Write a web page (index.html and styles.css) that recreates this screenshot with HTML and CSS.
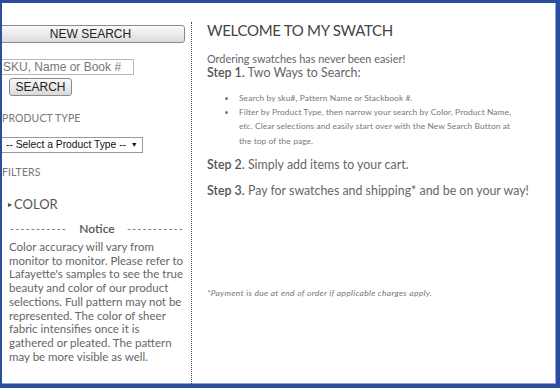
FILE: index.html
```html
<!DOCTYPE html>
<html lang="en">
<head>
  <meta charset="UTF-8">
  <title>My Swatch</title>
  <link rel="stylesheet" href="styles.css">
</head>
<body>
<div class="frame">
  <div class="sidebar">
    <button class="new-search" type="button">NEW SEARCH</button>
    <form class="search-form">
      <input type="text" class="sku-input" placeholder="SKU, Name or Book #">
      <button class="search-btn" type="button">SEARCH</button>
    </form>
    <div class="side-label">PRODUCT TYPE</div>
    <div class="select-box">-- Select a Product Type -- <span class="arrow">&#9660;</span></div>
    <div class="side-label filters">FILTERS</div>
    <div class="filter-item"><span class="tri">&#9656;</span>COLOR</div>
    <div class="notice-title"><span>-----------</span><b>Notice</b><span>-----------</span></div>
    <p class="notice">Color accuracy will vary from monitor to monitor. Please refer to Lafayette's samples to see the true beauty and color of our product selections. Full pattern may not be represented. The color of sheer fabric intensifies once it is gathered or pleated. The pattern may be more visible as well.</p>
  </div>
  <div class="main">
    <h1>WELCOME TO MY SWATCH</h1>
    <p class="intro">Ordering swatches has never been easier!</p>
    <p class="step first"><b>Step 1.</b> Two Ways to Search:</p>
    <ul class="tips">
      <li>Search by sku#, Pattern Name or Stackbook #.</li>
      <li>Filter by Product Type, then narrow your search by Color, Product Name, etc. Clear selections and easily start over with the New Search Button at the top of the page.</li>
    </ul>
    <p class="step second"><b>Step 2.</b> Simply add items to your cart.</p>
    <p class="step"><b>Step 3.</b> Pay for swatches and shipping* and be on your way!</p>
    <p class="footnote">*Payment is due at end of order if applicable charges apply.</p>
  </div>
</div>
</body>
</html>
```

FILE: styles.css
```css
body {
  margin: 0;
  background-color: #fff;
}
.frame {
  width: 560px;
  height: 388px;
  box-sizing: border-box;
  border-top: 3px solid #2a4d9f;
  border-left: 2px solid #2a4d9f;
  border-right: 4px solid #2a4d9f;
  border-bottom: 4px solid #2a4d9f;
  box-shadow: inset -1px -1px 0 #8ea6d8;
  display: flex;
  overflow: hidden;
  font-family: Lato, "Noto Sans", sans-serif;
  color: #666;
}
.sidebar {
  width: 196px;
  margin-left: -6px;
  margin-top: 19px;
  padding-bottom: 4px;
  box-sizing: border-box;
  border-right: 1px dotted #444;
  flex-shrink: 0;
}
.new-search {
  display: block;
  width: 189px;
  height: 18px;
  margin-top: 3px;
  padding: 0;
  font-family: "Liberation Sans", Arial, sans-serif;
  font-size: 12px;
  color: #222;
  background: linear-gradient(#fafafa, #dcdcdc);
  border: 1px solid #8a8a8a;
  border-radius: 3px;
}
.search-form {
  margin-top: 16px;
}
.sku-input {
  display: block;
  width: 138px;
  height: 16px;
  box-sizing: border-box;
  padding: 0 0 0 6px;
  font-family: "Liberation Sans", Arial, sans-serif;
  font-size: 12px;
  border: 1px solid #b8b8b8;
}
.sku-input::placeholder {
  color: #777;
}
.search-btn {
  display: block;
  margin: 3px 0 0 13px;
  width: 63px;
  height: 18px;
  padding: 0;
  font-family: "Liberation Sans", Arial, sans-serif;
  font-size: 12px;
  color: #222;
  background: linear-gradient(#fafafa, #d9d9d9);
  border: 1px solid #8a8a8a;
  border-radius: 3px;
}
.side-label {
  margin: 15.5px 0 0 6px;
  font-size: 10.5px;
  line-height: 13px;
  letter-spacing: 0.1px;
  color: #777;
}
.select-box {
  width: fit-content;
  margin-top: 12.5px;
  height: 16px;
  line-height: 14px;
  box-sizing: border-box;
  padding: 0 4px 0 9px;
  border: 1px solid #999;
  font-family: "Liberation Sans", Arial, sans-serif;
  font-size: 10.3px;
  color: #111;
}
.arrow {
  font-size: 7px;
  margin-left: 2px;
  vertical-align: 1px;
}
.filters {
  margin-top: 12.5px;
}
.filter-item {
  margin: 17.5px 0 0 12px;
  font-size: 13px;
  line-height: 16px;
  color: #555;
}
.tri {
  font-size: 8px;
  margin-right: 2px;
  vertical-align: 2px;
  color: #444;
}
.notice-title {
  display: flex;
  justify-content: space-between;
  align-items: center;
  margin: 10px 7px 0 14px;
  line-height: 14px;
  font-size: 11px;
  color: #777;
}
.notice-title span {
  letter-spacing: 1.1px;
}
.notice-title b {
  font-size: 12px;
  color: #555;
  font-weight: 600;
}
.notice {
  width: 176px;
  margin: 4px 0 0 13px;
  font-size: 11.5px;
  line-height: 13.7px;
  color: #666;
}
.main {
  padding: 17px 0 0 15px;
  flex: 1;
}
h1 {
  margin: 0;
  font-size: 15px;
  line-height: 20px;
  letter-spacing: -0.3px;
  font-weight: 400;
  color: #444;
}
.intro {
  margin: 11.5px 0 0;
  font-size: 10.9px;
  line-height: 13px;
  color: #666;
}
.step {
  margin: 11px 0 0;
  font-size: 12.4px;
  line-height: 15px;
  color: #666;
}
.step.first {
  margin-top: 0;
}
.step.second {
  margin-top: 9px;
}
.step b {
  font-weight: 600;
  color: #555;
}
.tips {
  width: 310px;
  box-sizing: border-box;
  margin: 11px 0 0;
  padding-left: 30px;
  font-size: 8.4px;
  line-height: 14.4px;
  letter-spacing: 0.1px;
  color: #777;
}
.tips li {
  padding-left: 2px;
}
.footnote {
  margin: 90px 0 0;
  font-size: 8.5px;
  letter-spacing: 0.3px;
  font-style: italic;
  color: #777;
}
```
